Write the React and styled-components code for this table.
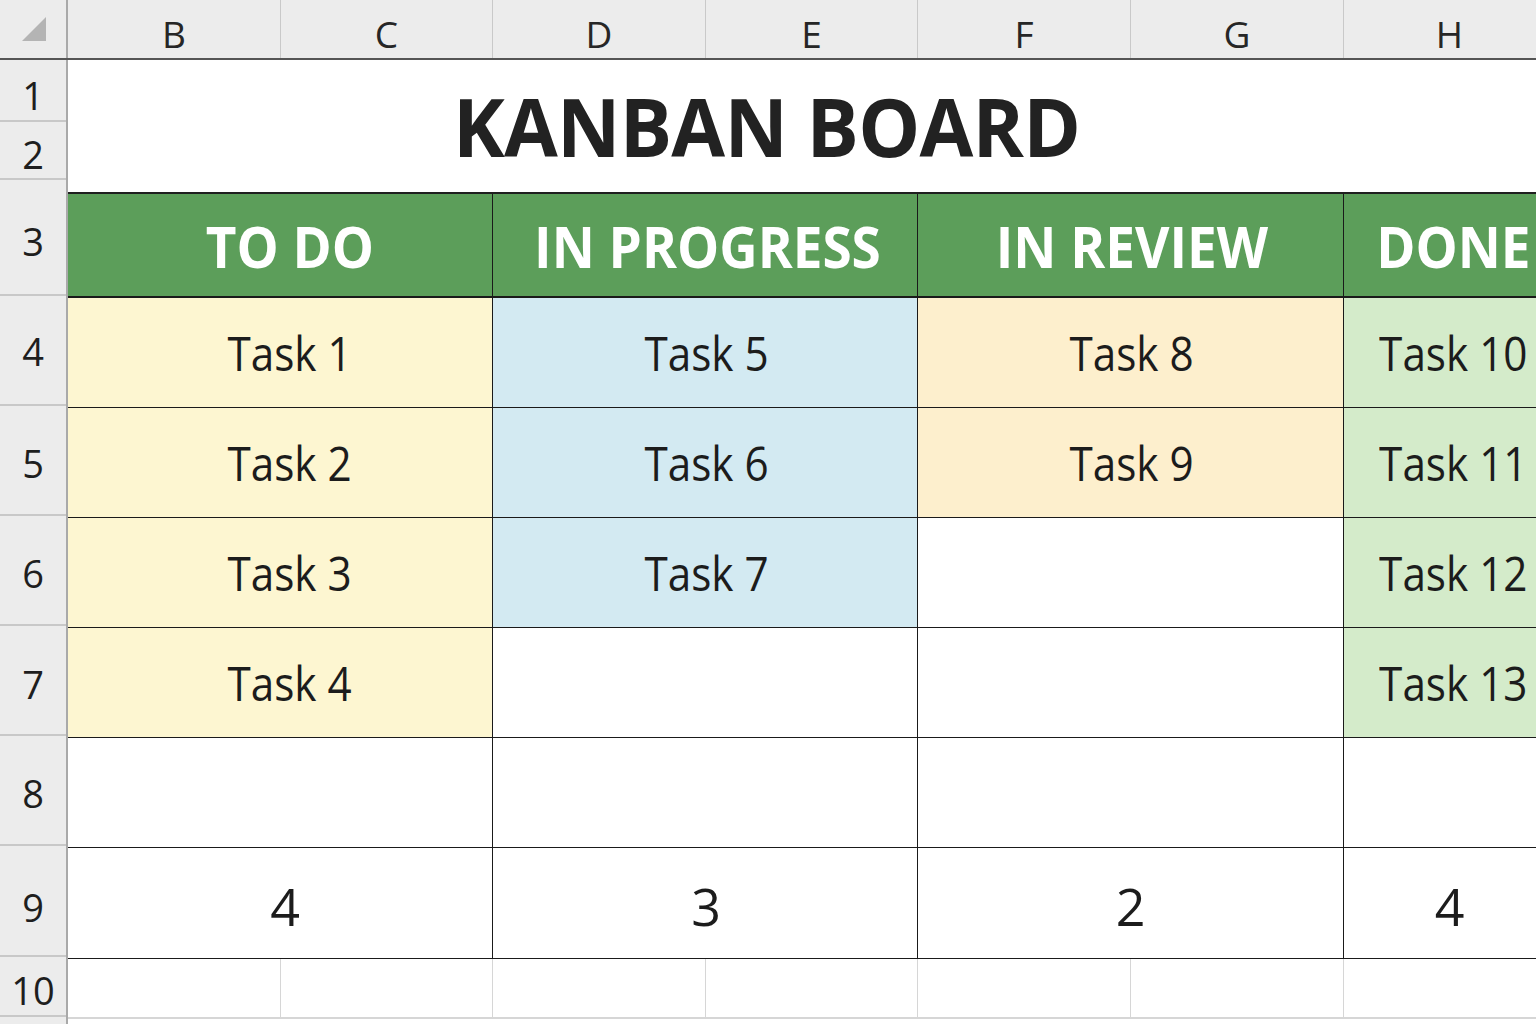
import React from "react";
import styled, { createGlobalStyle } from "styled-components";

const GlobalStyle = createGlobalStyle`
  html, body {
    margin: 0;
    padding: 0;
    background: #ffffff;
    overflow: hidden;
  }
  * {
    box-sizing: border-box;
  }
`;

const Page = styled.div`
  width: 1536px;
  height: 1024px;
  overflow: hidden;
  font-family: "Open Sans", "Noto Sans", sans-serif;
  color: #1e1e1e;
  background: #ffffff;
`;

const HeaderRow = styled.div`
  display: flex;
  height: 60px;
  background: #ececec;
  border-bottom: 2px solid #555555;
`;

const Corner = styled.div`
  width: 68px;
  flex: none;
  display: flex;
  align-items: center;
  justify-content: center;
  border-right: 2px solid #a9a9a9;
  padding-left: 2px;
`;

const ColLetter = styled.div`
  width: ${(p) => p.w}px;
  flex: none;
  display: flex;
  align-items: center;
  justify-content: center;
  font-size: 37px;
  color: #262626;
  border-right: 1px solid #c9c9c9;
  padding-top: 8px;
`;

const Body = styled.div`
  display: flex;
`;

const RowHeads = styled.div`
  width: 68px;
  flex: none;
  display: flex;
  flex-direction: column;
  background: #ececec;
  border-right: 2px solid #a9a9a9;
`;

const RowHead = styled.div`
  height: ${(p) => p.h}px;
  flex: none;
  display: flex;
  align-items: center;
  justify-content: center;
  font-size: 38px;
  color: #1e1e1e;
  border-bottom: 2px solid #c8c8c8;
  padding-top: ${(p) => p.pt || 0}px;
`;

const Cells = styled.div`
  width: 1488px;
  flex: none;
  display: flex;
  flex-direction: column;
`;

const TitleBlock = styled.div`
  height: 132px;
  display: flex;
  align-items: center;
  justify-content: center;
  padding-right: 90px;
`;

const Title = styled.h1`
  margin: 0;
  font-size: 80px;
  font-weight: 700;
  color: #222222;
  letter-spacing: -0.8px;
  line-height: 1;
  transform: scaleX(0.975);
`;

const Board = styled.div`
  display: grid;
  grid-template-columns: 425px 425px 426px 212px;
  grid-template-rows: 104px repeat(5, 110px) 111px;
  grid-auto-flow: column;
  border-top: 2px solid #1f1f1f;
`;

const HeadCell = styled.div`
  display: flex;
  align-items: center;
  justify-content: center;
  background: #5c9e5a;
  border-right: 1.5px solid #1a1a1a;
  border-bottom: 2px solid #1a1a1a;
  overflow: hidden;
  padding-left: ${(p) => p.pl || 0}px;
`;

const HeadText = styled.span`
  display: inline-block;
  color: #ffffff;
  font-size: 58px;
  font-weight: 700;
  white-space: nowrap;
  transform: scaleX(0.915);
`;

const Cell = styled.div`
  display: flex;
  align-items: center;
  justify-content: center;
  background: ${(p) => p.bg || "#ffffff"};
  border-right: 1.5px solid #1a1a1a;
  border-bottom: 1.5px solid #1a1a1a;
  overflow: hidden;
  padding-left: ${(p) => p.pl || 0}px;
`;

const TaskText = styled.span`
  display: inline-block;
  font-size: 48px;
  color: #1c1c1c;
  white-space: nowrap;
  transform: scaleX(0.88);
`;

const CountText = styled.span`
  display: inline-block;
  font-size: 52px;
  color: #1c1c1c;
  padding-top: 4px;
`;

const BlankRow = styled.div`
  display: flex;
  height: 60px;
  border-bottom: 2px solid #d6d6d6;
`;

const BlankCell = styled.div`
  width: ${(p) => p.w}px;
  flex: none;
  border-right: 1.5px solid #d6d6d6;
`;

const letters = [
  ["B", 213],
  ["C", 212],
  ["D", 213],
  ["E", 212],
  ["F", 213],
  ["G", 213],
  ["H", 212],
];

const rows = [
  ["1", 62, 10],
  ["2", 58, 8],
  ["3", 116, 8],
  ["4", 110, 2],
  ["5", 110, 6],
  ["6", 110, 6],
  ["7", 110, 7],
  ["8", 110, 6],
  ["9", 111, 12],
  ["10", 60, 8],
  ["", 40, 0],
];

const columns = [
  { title: "TO DO", bg: "#fdf6d1", tasks: ["Task 1", "Task 2", "Task 3", "Task 4"], pl: 20, cpl: 10 },
  { title: "IN PROGRESS", bg: "#d3eaf2", tasks: ["Task 5", "Task 6", "Task 7"], pl: 4, cpl: 2 },
  { title: "IN REVIEW", bg: "#fdefcd", tasks: ["Task 8", "Task 9"], pl: 2, cpl: 0 },
  { title: "DONE", bg: "#d4ebca", tasks: ["Task 10", "Task 11", "Task 12", "Task 13"], pl: 8, cpl: 0 },
];

function CornerMark() {
  return (
    <svg width="26" height="26" viewBox="0 0 26 26">
      <polygon points="25,1 25,25 1,25" fill="#b4b4b4" />
    </svg>
  );
}

export default function App() {
  return (
    <Page>
      <GlobalStyle />
      <HeaderRow>
        <Corner>
          <CornerMark />
        </Corner>
        {letters.map(([l, w]) => (
          <ColLetter key={l} w={w}>
            {l}
          </ColLetter>
        ))}
      </HeaderRow>
      <Body>
        <RowHeads>
          {rows.map(([n, h, pt], i) => (
            <RowHead key={i} h={h} pt={pt}>
              {n}
            </RowHead>
          ))}
        </RowHeads>
        <Cells>
          <TitleBlock>
            <Title>KANBAN BOARD</Title>
          </TitleBlock>
          <Board>
            {columns.map((col) => (
              <React.Fragment key={col.title}>
                <HeadCell pl={col.pl}>
                  <HeadText>{col.title}</HeadText>
                </HeadCell>
                {[0, 1, 2, 3, 4].map((r) => {
                  const t = col.tasks[r];
                  return (
                    <Cell key={r} bg={t ? col.bg : "#ffffff"} pl={col.pl}>
                      {t && <TaskText>{t}</TaskText>}
                    </Cell>
                  );
                })}
                <Cell pl={col.cpl}>
                  <CountText>{col.tasks.length}</CountText>
                </Cell>
              </React.Fragment>
            ))}
          </Board>
          <BlankRow>
            {letters.map(([l, w]) => (
              <BlankCell key={l} w={w} />
            ))}
          </BlankRow>
        </Cells>
      </Body>
    </Page>
  );
}
